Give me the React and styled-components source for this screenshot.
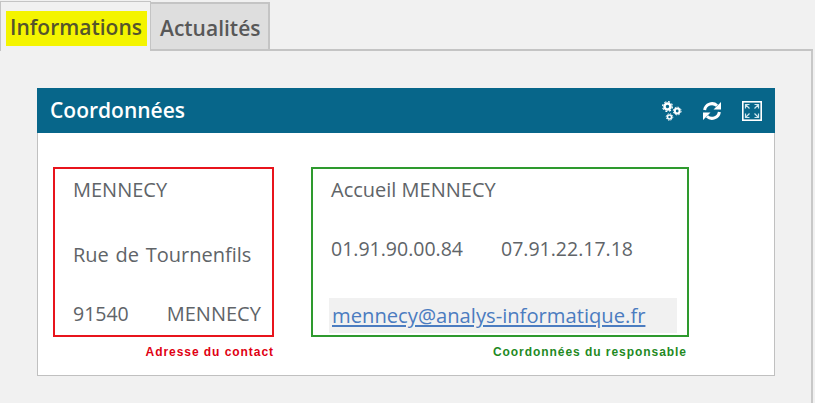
import styled, { createGlobalStyle } from 'styled-components'

const GlobalStyle = createGlobalStyle`
  html, body {
    margin: 0;
    padding: 0;
    background: #f1f1f1;
  }
  body {
    font-family: "Open Sans", "Noto Sans", sans-serif;
  }
`

const Page = styled.div`
  width: 815px;
  height: 403px;
  overflow: hidden;
  background: #f1f1f1;
`

const TabBar = styled.div`
  display: flex;
  align-items: flex-end;
  width: 813px;
  height: 51px;
  border-bottom: 2px solid #c4c4c4;
  box-sizing: border-box;
`

const ActiveTab = styled.div`
  width: 151px;
  height: 50px;
  margin-bottom: -2px;
  padding: 9px 3px 0 5px;
  box-sizing: border-box;
  background: #f1f1f1;
  border: 1px solid #c4c4c4;
  border-bottom: none;
`

const Highlight = styled.span`
  display: block;
  height: 35px;
  background: #f4f400;
  color: #55552c;
  font-size: 21px;
  font-weight: 600;
  line-height: 33px;
  padding-left: 4px;
`

const Tab = styled.div`
  width: 119px;
  height: 47px;
  padding: 7px 0 0 9px;
  box-sizing: border-box;
  background: #dedede;
  border: 2px solid #c4c4c4;
  border-bottom: none;
  border-left: none;
  color: #585858;
  font-size: 21px;
  font-weight: 600;
  line-height: 34px;
`

const Content = styled.div`
  width: 813px;
  height: 352px;
  padding: 37px 36px 0 37px;
  box-sizing: border-box;
  border-right: 2px solid #c8c8c8;
`

const Card = styled.section`
  height: 288px;
  background: #fff;
  border: 1px solid #c0c0c0;
  border-top: none;
  box-sizing: border-box;
`

const CardHeader = styled.header`
  display: flex;
  align-items: center;
  justify-content: space-between;
  height: 45px;
  margin: 0 -1px;
  padding: 0 13px;
  background: #07668a;
  color: #fff;
`

const CardTitle = styled.h2`
  margin: 0;
  font-size: 21px;
  font-weight: 600;
  line-height: 45px;
`

const Tools = styled.div`
  display: flex;
  align-items: center;
  gap: 20px;
  color: #fff;
`

const CardBody = styled.div`
  display: flex;
  gap: 37px;
  padding: 34px 0 0 15px;
`

const Column = styled.div`
  display: flex;
  flex-direction: column;
  align-items: flex-end;
`

const Frame = styled.div`
  width: ${({ $width }) => $width}px;
  height: 170px;
  box-sizing: border-box;
  border: 2px solid ${({ $color }) => $color};
  padding-left: 18px;
  color: #606468;
  font-size: 20px;
`

const Line = styled.div`
  display: flex;
  gap: ${({ $gap }) => $gap || 0}px;
  height: ${({ $height }) => $height}px;
  line-height: ${({ $height }) => $height}px;
  white-space: nowrap;
`

const Street = styled(Line)`
  word-spacing: 1.5px;
`

const Digits = styled.span`
  font-size: 19.5px;
`

const MailRow = styled.div`
  height: 35px;
  width: 348px;
  margin-left: -2px;
  padding-left: 3px;
  box-sizing: border-box;
  background: #f1f1f1;
  line-height: 34px;
  font-size: 20.2px;
`

const Mail = styled.a`
  color: #4b7cc0;
  text-decoration: underline;
`

const Caption = styled.div`
  margin: 8px 0 0;
  padding-right: ${({ $right }) => $right}px;
  color: ${({ $color }) => $color};
  font-family: "Liberation Sans", Arial, sans-serif;
  font-size: 12px;
  font-weight: 700;
  letter-spacing: 0.95px;
  line-height: 14px;
`

const GearsIcon = () => (
  <svg width="20" height="20" viewBox="0 0 20 20" fill="none" stroke="#fff">
    <circle cx="5.5" cy="5.5" r="3" strokeWidth="2.6" />
    <circle cx="5.5" cy="5.5" r="4.9" strokeWidth="1.2" strokeDasharray="2 1.85" />
    <circle cx="15.2" cy="10" r="2.4" strokeWidth="2" />
    <circle cx="15.2" cy="10" r="3.9" strokeWidth="1" strokeDasharray="1.7 1.35" />
    <circle cx="7.5" cy="16" r="2" strokeWidth="1.6" />
    <circle cx="7.5" cy="16" r="3.3" strokeWidth="0.9" strokeDasharray="1.4 1.2" />
  </svg>
)

const RefreshIcon = () => (
  <svg width="20" height="20" viewBox="0 0 20 20">
    <path d="M2.6 9A7.5 7.5 0 0 1 15 4.6M17.4 11A7.5 7.5 0 0 1 5 15.4" fill="none" stroke="#fff" strokeWidth="3" />
    <path d="M19 1v7.5h-7.5zM1 19v-7.5h7.5z" fill="#fff" />
  </svg>
)

const ExpandIcon = () => (
  <svg width="20" height="20" viewBox="0 0 20 20" fill="none" stroke="#fff">
    <rect x="0.8" y="0.8" width="18.4" height="18.4" strokeWidth="1.6" />
    <path d="M3.5 7.5v-4h4M3.5 3.5l4 4M12.5 3.5h4v4M16.5 3.5l-4 4M3.5 12.5v4h4M3.5 16.5l4-4M16.5 12.5v4h-4M16.5 16.5l-4-4" strokeWidth="1.2" stroke="#cfe6ee" />
  </svg>
)

export default function App() {
  return (
    <Page>
      <GlobalStyle />
      <TabBar>
        <ActiveTab>
          <Highlight>Informations</Highlight>
        </ActiveTab>
        <Tab>Actualités</Tab>
      </TabBar>
      <Content>
        <Card>
          <CardHeader>
            <CardTitle>Coordonnées</CardTitle>
            <Tools>
              <GearsIcon />
              <RefreshIcon />
              <ExpandIcon />
            </Tools>
          </CardHeader>
          <CardBody>
            <Column>
              <Frame $width={221} $color="#e8141c">
                <Line $height={42}>MENNECY</Line>
                <Street $height={87}>Rue de Tournenfils</Street>
                <Line $height={31} $gap={38}>
                  <Digits>91540</Digits>
                  <span>MENNECY</span>
                </Line>
              </Frame>
              <Caption $color="#e00012" $right={0}>Adresse du contact</Caption>
            </Column>
            <Column>
              <Frame $width={378} $color="#2e9a2e">
                <Line $height={42}>Accueil MENNECY</Line>
                <Line $height={75} $gap={38}>
                  <Digits>01.91.90.00.84</Digits>
                  <Digits>07.91.22.17.18</Digits>
                </Line>
                <Line $height={12} />
                <MailRow>
                  <Mail href="#">mennecy@analys-informatique.fr</Mail>
                </MailRow>
              </Frame>
              <Caption $color="#1f8a1f" $right={2}>Coordonnées du responsable</Caption>
            </Column>
          </CardBody>
        </Card>
      </Content>
    </Page>
  )
}
